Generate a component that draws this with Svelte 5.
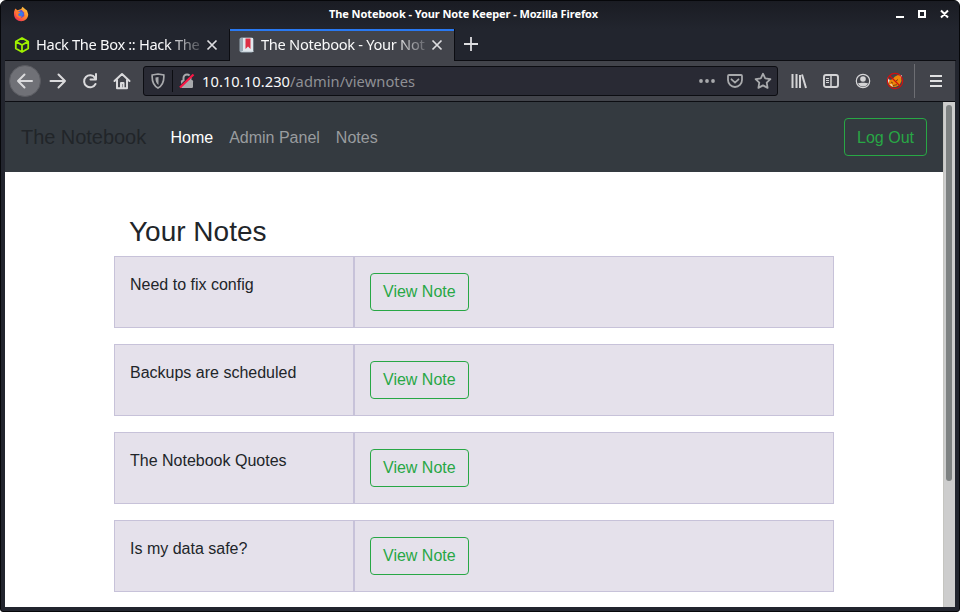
<script>
  const notes = ['Need to fix config', 'Backups are scheduled', 'The Notebook Quotes', 'Is my data safe?'];
</script>

<div class="desktop">
  <div class="window">
    <header class="titlebar">
      <svg class="fox" width="16" height="16" viewBox="0 0 16 16">
        <defs>
          <linearGradient id="flame" x1="1" y1="0" x2=".2" y2="1"><stop offset="0" stop-color="#ffdc4a" /><stop offset=".5" stop-color="#ff8a2d" /><stop offset="1" stop-color="#ef2b58" /></linearGradient>
        </defs>
        <path d="M1 6 2.200 2.500 4.500 4.200 8.200 3 9.500.8 12 3l2 1.500 1.200 3.800c0 4-3 6.900-7 6.900S1 12.500 1 8z" fill="url(#flame)" />
        <path d="M5 5.500 8.500 3.800 11 6.500l.3 3.500-3 1.900L5 10z" fill="#6150c9" />
        <path d="M5.500 5 9 6l1.500 2-2 2.500-3-.8z" fill="#347dec" />
        <path d="M2.200 4.500 5 5.200 7.500 6.600 5.200 8l.5 2 3.200.6-2 1.700-3.400-2z" fill="#ff762f" />
      </svg>
      <span class="caption">The Notebook - Your Note Keeper - Mozilla Firefox</span>
      <svg class="controls" width="54" height="12" viewBox="0 0 54 12">
        <path d="M1 9h8M24 3h6v6h-6zM46 2.500l7 7m0-7-7 7" fill="none" stroke="#fff" stroke-width="2" />
      </svg>
    </header>

    <div class="tabs">
      <div class="tab">
        <svg width="16" height="16" viewBox="0 0 16 16" fill="none" stroke="#9fef00" stroke-width="1.800" stroke-linejoin="round"><path d="M8 1 14.200 4.500v7L8 15l-6.200-3.500v-7zM2 4.600 8 8l6-3.400M8 8v7" /></svg>
        <span class="label first">Hack The Box :: Hack The</span>
        <svg class="close" width="12" height="12" viewBox="0 0 12 12"><path d="m1.500 1.500 9 9m0-9-9 9" stroke="#dddde0" stroke-width="1.700" /></svg>
      </div>
      <div class="tab active">
        <svg width="16" height="16" viewBox="0 0 16 16"><rect x=".5" y=".5" width="14" height="15" rx="2" fill="#99aab5" /><path d="M4 1h10v13H4z" fill="#e1e8ed" /><path d="M2.500 14.500h12" stroke="#ccd6dd" /><path d="M6.500 1.500h5V12L9 9.600 6.500 12z" fill="#dd2e44" /></svg>
        <span class="label second">The Notebook - Your Not</span>
        <svg class="close" width="12" height="12" viewBox="0 0 12 12"><path d="m1.500 1.500 9 9m0-9-9 9" stroke="#dddde0" stroke-width="1.700" /></svg>
      </div>
      <svg class="plus" width="16" height="16" viewBox="0 0 16 16"><path d="M1 8h14M8 1v14" stroke="#dddde0" stroke-width="1.800" /></svg>
    </div>

    <div class="toolbar">
      <div class="nav-buttons">
        <span class="back"><svg width="18" height="18" viewBox="0 0 18 18" class="line"><path d="M16 9H2m6.500-6.500L2 9l6.500 6.500" /></svg></span>
        <svg width="18" height="18" viewBox="0 0 18 18" class="line"><path d="M1.500 9H16M9.500 2.500 16 9l-6.500 6.500" /></svg>
        <svg width="16" height="16" viewBox="0 0 16 16" class="line"><path d="M13 4.800A6 6 0 1 0 13.500 11M14 1v5.500H8.500" /></svg>
        <svg width="18" height="18" viewBox="0 0 18 18" class="line home"><path d="m1.500 9 7.500-7 7.500 7M4 8v8.200h10V8M8 16v-5h2.500v5" /></svg>
      </div>
      <div class="address">
        <svg class="shield" width="14" height="16" viewBox="0 0 14 16"><path d="M1.200 2 7 1l5.800 1c.4 5.700-.8 10.300-5.800 13C2 12.300.8 7.700 1.200 2z" fill="none" stroke="#a8a9ac" stroke-width="1.700" /><path d="M7.500 4v8C5 10.300 4.300 7.500 4.500 4.500z" fill="#a8a9ac" /></svg>
        <i></i>
        <svg class="lock" width="16" height="16" viewBox="0 0 16 16"><path d="M4.500 8V5a3.500 3.500 0 0 1 7 0v3" fill="none" stroke="#a8a9ac" stroke-width="2" /><rect x="2" y="7" width="12" height="8" rx="1.200" fill="#a8a9ac" /><path d="M1 13.500 13.500 1" stroke="#292a34" stroke-width="2" /><path d="m1 14.500 13.500-13" stroke="#fa1745" stroke-width="2.200" /></svg>
        <span class="url"><b>10.10.10.230</b>/admin/viewnotes</span>
        <svg class="dots" width="16" height="4" viewBox="0 0 16 4" fill="#a8a9ac"><circle cx="2" cy="2" r="1.900" /><circle cx="8" cy="2" r="1.900" /><circle cx="14" cy="2" r="1.900" /></svg>
        <svg class="pocket" width="16" height="14" viewBox="0 0 16 14" fill="none" stroke="#a8a9ac" stroke-width="1.800" stroke-linecap="round"><path d="M2 1h12q1 0 1 1v4a7 7 0 0 1-14 0V2q0-1 1-1zM4.500 5.300 8 8.600l3.500-3.300" /></svg>
        <svg class="star" width="18" height="18" viewBox="0 0 18 18" fill="none" stroke="#a8a9ac" stroke-width="1.800" stroke-linejoin="round"><path d="m9 1.700 2.200 4.700 5.200.7-3.700 3.600.9 5.200L9 13.400l-4.600 2.500.9-5.200-3.700-3.600 5.200-.7z" /></svg>
      </div>
      <div class="tools">
        <svg width="16" height="16" viewBox="0 0 16 16" fill="none" stroke="#d4d4d6" stroke-width="2"><path d="M1.500 1v14M5.500 1v14M9 2v13M11 1.500l4 13.500" /></svg>
        <svg width="16" height="16" viewBox="0 0 16 16" fill="none" stroke="#d4d4d6"><rect x="1" y="2" width="14" height="12" rx="2" stroke-width="1.900" /><path d="M8 2v12" stroke-width="1.500" /><path d="M3 5.500h3M3 7.500h3M3 9.500h3" /></svg>
        <svg width="16" height="16" viewBox="0 0 16 16"><circle cx="8" cy="8" r="6.700" fill="none" stroke="#d4d4d6" stroke-width="1.200" /><circle cx="8" cy="6" r="2.800" fill="#d4d4d6" /><path d="M3 10.300q2.200-.5 3.500-.6h3q1.300.1 3.500.6a5.500 5.500 0 0 1-10 0z" fill="#d4d4d6" /></svg>
        <svg width="18" height="18" viewBox="0 0 18 18"><path d="m3 8 3-.5 3-3 3-1.500 3 1 .5 5-2 4-4 2-5-.5-2-3z" fill="#ed8508" /><path d="m1.200 5.500 2.300 2.300-.8 4zM13 2.500l3 1-.5 3zM3.500 12l2.500.5 1 2.500z" fill="#eee" /><path d="m5 10 2 1.200M10 9l2-1.500M7 13.500l4-.8" stroke="#7b3e13" /><circle cx="9" cy="9" r="7.700" fill="none" stroke="#cf1010" stroke-width="1.200" /><path d="m3.500 3.500 11 11" stroke="#cf1010" stroke-width="1.300" /></svg>
      </div>
      <div class="menu"><svg width="12" height="12" viewBox="0 0 12 12"><path d="M0 1h12M0 6h12M0 11h12" stroke="#e0e0e1" stroke-width="1.900" /></svg></div>
    </div>

    <div class="viewport">
      <div class="page">
        <nav>
          <span class="brand">The Notebook</span>
          <span class="link current">Home</span>
          <span class="link">Admin Panel</span>
          <span class="link">Notes</span>
          <button class="logout">Log Out</button>
        </nav>
        <main>
          <h3>Your Notes</h3>
          {#each notes as note}
            <div class="row">
              <div class="cell name">{note}</div>
              <div class="cell action"><button>View Note</button></div>
            </div>
          {/each}
        </main>
      </div>
      <div class="scroll"><div class="thumb"></div></div>
    </div>
  </div>
</div>

<style>
  .desktop { width: 960px; height: 612px; background: #fff; overflow: hidden; }
  .desktop * { box-sizing: border-box; }
  svg { display: block; flex: none; }
  .window { height: 612px; display: flex; flex-direction: column; background: #22252e; border: 1px solid #06070a; border-radius: 6px 6px 3px 3px; padding: 0 4px 4px; overflow: hidden; font-family: "Noto Sans", sans-serif; }
  .titlebar { height: 28px; flex: none; display: flex; align-items: center; justify-content: space-between; margin: 0 -4px; padding: 0 10px 2px 12px; background: linear-gradient(#1a1c23, #22252e); }
  .caption { color: #fff; font: 700 11px/14px "Noto Sans", sans-serif; width: 272px; margin-left: 6px; white-space: nowrap; letter-spacing: -.08px; }
  .tabs { height: 32px; flex: none; display: flex; border-bottom: 1px solid #0c0d12; margin-right: -1px; }
  .tab { width: 224px; display: flex; align-items: center; padding: 1px 11px 0 9px; }
  .tab.active { width: 226px; height: 32px; padding-right: 11px; padding-bottom: 1px; background: #42444b; border: solid #0c0d12; border-width: 0 1px; box-shadow: inset 0 2px #2979f2; }
  .label { width: 170px; margin: 0 0 2px 6px; white-space: nowrap; color: #f9f9fa; font-size: 14.670px; line-height: 22px; letter-spacing: -.34px; mask-image: linear-gradient(90deg, #000 132px, transparent 172px); }
  .second { width: 168px; letter-spacing: -.3px; }
  .close { width: 12px; margin-left: auto; }
  .plus { margin: 7px 0 0 8px; }
  .toolbar { height: 41px; flex: none; display: flex; align-items: center; background: #42444b; border-bottom: 1px solid #0c0d12; }
  .nav-buttons { width: 138px; display: flex; align-items: center; padding-left: 4px; gap: 15px; }
  .back { width: 32px; height: 32px; border-radius: 50%; border: 1px solid #5a5b61; background: #707177; display: flex; align-items: center; justify-content: center; margin-right: -7px; }
  .line { fill: none; stroke: #dadadc; stroke-width: 2; stroke-linecap: round; stroke-linejoin: round; }
  .address { width: 635px; height: 30px; flex: none; display: flex; align-items: center; background: #292a34; border: 1px solid #0c0d12; border-radius: 3px; padding: 0 5px 0 7px; }
  .address i { width: 1px; height: 22px; background: #0c0d12; margin: 0 6px 0 7px; }
  .url { color: #8f9095; font-size: 14.670px; line-height: 20px; letter-spacing: .07px; margin: 0 auto 0 7px; }
  .url b { color: #f9f9fa; font-weight: 400; }
  .pocket { margin: 0 11px 0 12px; }
  .tools { display: flex; align-items: center; gap: 16px; margin-left: 13px; }
  .tools svg:last-child { margin-left: -1px; }
  .menu { width: 41px; height: 34px; border-left: 1px solid #6d6e73; display: flex; align-items: center; padding-left: 15px; margin-left: auto; }
  .viewport { flex: 1; min-height: 0; display: flex; background: #fff; overflow: hidden; }
  .page { width: 938px; height: 505px; overflow: hidden; font: 16px/24px "Liberation Sans", Arial, sans-serif; color: #212529; }
  nav { height: 70px; display: flex; align-items: center; background: #343a40; padding: 0 16px; }
  .brand { font-size: 20px; line-height: 30px; margin-right: 16.300px; letter-spacing: -.04px; }
  .link { padding: 1px 8px 0; color: #999c9f; }
  .link.current { color: #fff; }
  button { height: 38px; padding: 6px 12px; border: 1px solid #28a745; border-radius: 4px; background: transparent; color: #28a745; font: 16px/24px "Liberation Sans", Arial, sans-serif; display: block; }
  .logout { margin-left: auto; padding-top: 7px; padding-bottom: 5px; }
  main { width: 720px; margin: 0 auto; padding-top: 43px; }
  h3 { margin: 0 0 8px; padding: 0 15px; font-size: 28px; line-height: 33px; font-weight: 400; }
  .row { display: flex; height: 72px; margin-bottom: 16px; }
  .cell { border: 1px solid #c7c2d9; background: #e5e1eb; padding: 16px 15px; }
  .name { width: 240px; }
  .action { width: 480px; }
  .scroll { width: 12px; background: #cdcdcd; border-left: 1px solid #c5c5c0; padding: 3px 3px 0 2px; }
  .thumb { height: 376px; width: 6px; border-radius: 3px; background: #7e8282; }
</style>
